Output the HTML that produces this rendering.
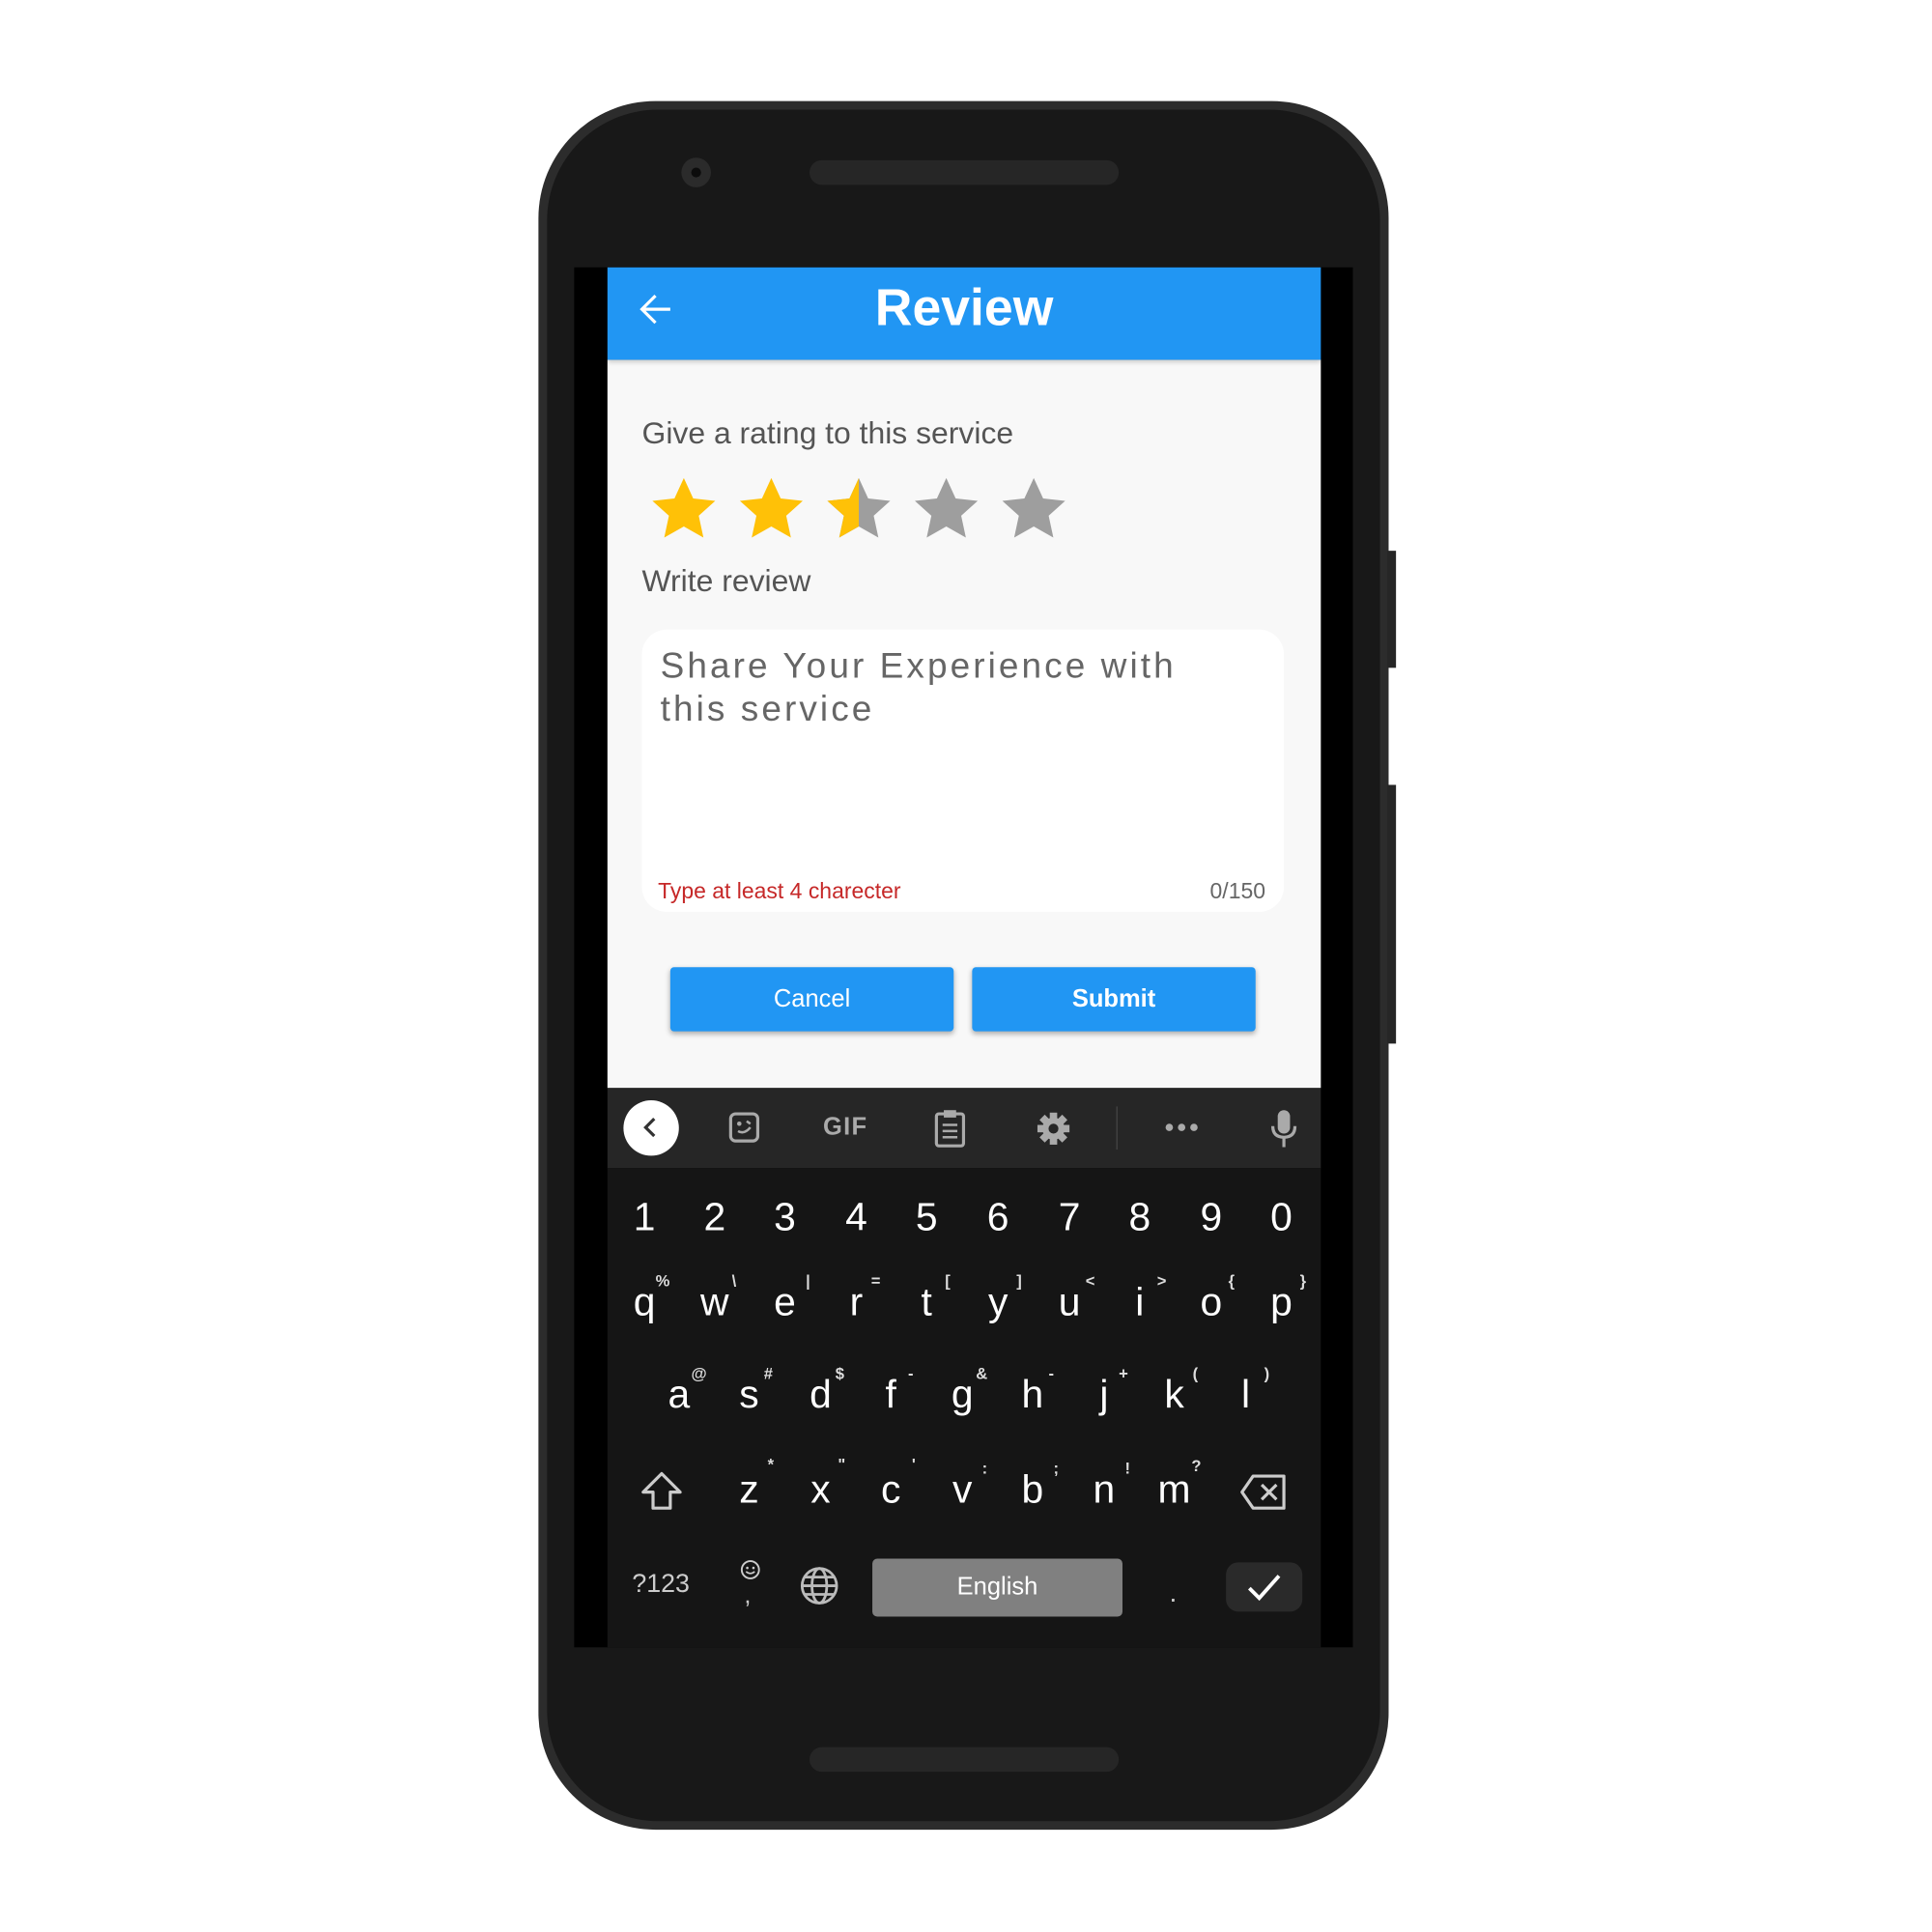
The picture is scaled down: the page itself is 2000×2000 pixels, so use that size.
<!DOCTYPE html>
<html><head><meta charset="utf-8"><style>
html,body{margin:0;padding:0;background:#fff;width:2000px;height:2000px;overflow:hidden}
#w{position:absolute;left:0;top:0;width:1568px;height:1568px;transform:scale(1.2755);transform-origin:0 0;font-family:"Liberation Sans",sans-serif}
.a{position:absolute}
.k{position:absolute;color:#fff;font-size:32px;transform:translate(-50%,-55%);line-height:1}
.s{position:absolute;color:#ddd;font-size:13px;font-weight:bold;line-height:1}
</style></head><body><div id="w">
<div class="a" style="left:437px;top:82px;width:690px;height:1403px;border-radius:95px;background:#2c2c2c"></div>
<div class="a" style="left:444px;top:89px;width:676px;height:1389px;border-radius:90px;background:#181818"></div>
<div class="a" style="left:1126px;top:447px;width:7px;height:95px;background:#262626"></div>
<div class="a" style="left:1126px;top:637px;width:7px;height:210px;background:#262626"></div>
<div class="a" style="left:553px;top:128px;width:24px;height:24px;border-radius:50%;background:#2b2b2b"></div>
<div class="a" style="left:561px;top:136px;width:8px;height:8px;border-radius:50%;background:#0c0c0c"></div>
<div class="a" style="left:657px;top:130px;width:251px;height:20px;border-radius:10px;background:#262626"></div>
<div class="a" style="left:657px;top:1418px;width:251px;height:20px;border-radius:10px;background:#262626"></div>
<div class="a" style="left:466px;top:217px;width:632px;height:1120px;background:#000"></div>
<div class="a" style="left:493px;top:292px;width:579px;height:591px;background:#f8f8f8"></div>
<div class="a" style="left:493px;top:217px;width:579px;height:75px;background:#2196f3;box-shadow:0 2px 4px rgba(0,0,0,.2)"></div>
<svg class="a" style="left:518px;top:237px" width="28" height="28" viewBox="0 0 28 28"><path d="M26 14H4M14 3L3 14l11 11" stroke="#fff" stroke-width="2.5" fill="none"/></svg>
<div class="a" style="left:493px;width:579px;top:226px;text-align:center;color:#fff;font-size:42px;font-weight:bold">Review</div>
<div class="a" style="left:521px;top:338px;color:#555;font-size:25px">Give a rating to this service</div>
<svg class="a" style="left:528px;top:386px" width="345" height="55" viewBox="0 0 345 55">
<defs><path id="st" d="M27 2l7.6 16.5 17.9 2-13.4 12.1 3.8 17.7L27 41.3 11.1 50.3l3.8-17.7L1.5 20.5l17.9-2z"/>
<clipPath id="h"><rect x="0" y="0" width="27" height="55"/></clipPath></defs>
<use href="#st" fill="#ffc107"/>
<use href="#st" x="71" fill="#ffc107"/>
<use href="#st" x="142" fill="#9e9e9e"/>
<g transform="translate(142 0)"><use href="#st" fill="#ffc107" clip-path="url(#h)"/></g>
<use href="#st" x="213" fill="#9e9e9e"/>
<use href="#st" x="284" fill="#9e9e9e"/>
</svg>
<div class="a" style="left:521px;top:458px;color:#555;font-size:25px">Write review</div>
<div class="a" style="left:521px;top:511px;width:521px;height:229px;border-radius:20px;background:#fff"></div>
<div class="a" style="left:536px;top:524px;width:480px;color:#666;font-size:29px;letter-spacing:2.4px;line-height:35px">Share Your Experience with this service</div>
<div class="a" style="left:534px;top:713px;color:#c62828;font-size:18px">Type at least 4 charecter</div>
<div class="a" style="left:982px;top:713px;color:#666;font-size:18px">0/150</div>
<div class="a" style="left:544px;top:785px;width:230px;height:52px;background:#2196f3;border-radius:3px;box-shadow:0 2px 4px rgba(0,0,0,.3);color:#fff;font-size:20px;text-align:center;line-height:52px">Cancel</div>
<div class="a" style="left:789px;top:785px;width:230px;height:52px;background:#2196f3;border-radius:3px;box-shadow:0 2px 4px rgba(0,0,0,.3);color:#fff;font-size:20px;text-align:center;line-height:52px;font-weight:bold">Submit</div>
<div class="a" style="left:493px;top:883px;width:579px;height:65px;background:#262626"></div>
<div class="a" style="left:493px;top:948px;width:579px;height:389px;background:#151515"></div>
<div class="a" style="left:506px;top:893px;width:45px;height:45px;border-radius:50%;background:#fff"></div>
<svg class="a" style="left:518px;top:905px" width="20" height="20"><path d="M13 3L6 10l7 7" stroke="#333" stroke-width="2.5" fill="none"/></svg>
<svg class="a" style="left:590px;top:901px" width="28" height="28"><rect x="3" y="3" width="22" height="22" rx="4" stroke="#aaa" stroke-width="2.5" fill="none"/><circle cx="10" cy="11" r="1.8" fill="#aaa"/><path d="M16 9l3 2M9 17q5 3 10-3" stroke="#aaa" stroke-width="2" fill="none"/></svg>
<div class="a" style="left:668px;top:904px;color:#aaa;font-size:20px;font-weight:bold;letter-spacing:1px">GIF</div>
<svg class="a" style="left:757px;top:900px" width="28" height="32"><rect x="3" y="4" width="22" height="26" rx="2" stroke="#aaa" stroke-width="2.5" fill="none"/><rect x="9" y="1" width="10" height="6" fill="#aaa"/><path d="M8 13h12M8 18h12M8 23h12" stroke="#aaa" stroke-width="2"/></svg>
<svg class="a" style="left:840px;top:901px" width="30" height="30" viewBox="0 0 30 30"><g fill="#aaa"><circle cx="15" cy="15" r="9"/><rect x="12" y="2" width="6" height="26"/><rect x="2" y="12" width="26" height="6"/><rect x="12" y="2" width="6" height="26" transform="rotate(45 15 15)"/><rect x="12" y="2" width="6" height="26" transform="rotate(-45 15 15)"/></g><circle cx="15" cy="15" r="4" fill="#262626"/></svg>
<div class="a" style="left:906px;top:898px;width:1px;height:35px;background:#444"></div>
<svg class="a" style="left:945px;top:910px" width="28" height="10"><circle cx="4" cy="5" r="3" fill="#aaa"/><circle cx="14" cy="5" r="3" fill="#aaa"/><circle cx="24" cy="5" r="3" fill="#aaa"/></svg>
<svg class="a" style="left:1030px;top:899px" width="24" height="34"><rect x="7" y="2" width="10" height="19" rx="5" fill="#aaa"/><path d="M3 15q0 9 9 9t9-9M12 24v8" stroke="#aaa" stroke-width="2.5" fill="none"/></svg>
<div class="k" style="left:523px;top:989px">1</div><div class="k" style="left:580px;top:989px">2</div><div class="k" style="left:637px;top:989px">3</div><div class="k" style="left:695px;top:989px">4</div><div class="k" style="left:752px;top:989px">5</div><div class="k" style="left:810px;top:989px">6</div><div class="k" style="left:868px;top:989px">7</div><div class="k" style="left:925px;top:989px">8</div><div class="k" style="left:983px;top:989px">9</div><div class="k" style="left:1040px;top:989px">0</div>
<div class="k" style="left:523px;top:1058px">q</div><div class="k" style="left:580px;top:1058px">w</div><div class="k" style="left:637px;top:1058px">e</div><div class="k" style="left:695px;top:1058px">r</div><div class="k" style="left:752px;top:1058px">t</div><div class="k" style="left:810px;top:1058px">y</div><div class="k" style="left:868px;top:1058px">u</div><div class="k" style="left:925px;top:1058px">i</div><div class="k" style="left:983px;top:1058px">o</div><div class="k" style="left:1040px;top:1058px">p</div>
<div class="s" style="left:532px;top:1033px">%</div><div class="s" style="left:594px;top:1033px">\</div><div class="s" style="left:654px;top:1033px">|</div><div class="s" style="left:707px;top:1033px">=</div><div class="s" style="left:767px;top:1033px">[</div><div class="s" style="left:825px;top:1033px">]</div><div class="s" style="left:881px;top:1033px">&lt;</div><div class="s" style="left:939px;top:1033px">&gt;</div><div class="s" style="left:997px;top:1033px">{</div><div class="s" style="left:1055px;top:1033px">}</div>
<div class="k" style="left:551px;top:1133px">a</div><div class="k" style="left:608px;top:1133px">s</div><div class="k" style="left:666px;top:1133px">d</div><div class="k" style="left:723px;top:1133px">f</div><div class="k" style="left:781px;top:1133px">g</div><div class="k" style="left:838px;top:1133px">h</div><div class="k" style="left:896px;top:1133px">j</div><div class="k" style="left:953px;top:1133px">k</div><div class="k" style="left:1011px;top:1133px">l</div>
<div class="s" style="left:561px;top:1108px">@</div><div class="s" style="left:620px;top:1108px">#</div><div class="s" style="left:678px;top:1108px">$</div><div class="s" style="left:737px;top:1108px">-</div><div class="s" style="left:792px;top:1108px">&amp;</div><div class="s" style="left:851px;top:1108px">-</div><div class="s" style="left:908px;top:1108px">+</div><div class="s" style="left:968px;top:1108px">(</div><div class="s" style="left:1026px;top:1108px">)</div>
<svg class="a" style="left:519px;top:1193px" width="36" height="36"><path d="M18 3L3 18h8v13h14V18h8z" stroke="#ccc" stroke-width="2.5" fill="none" stroke-linejoin="round"/></svg>
<div class="k" style="left:608px;top:1210px">z</div><div class="k" style="left:666px;top:1210px">x</div><div class="k" style="left:723px;top:1210px">c</div><div class="k" style="left:781px;top:1210px">v</div><div class="k" style="left:838px;top:1210px">b</div><div class="k" style="left:896px;top:1210px">n</div><div class="k" style="left:953px;top:1210px">m</div>
<div class="s" style="left:623px;top:1182px">*</div><div class="s" style="left:680px;top:1182px">"</div><div class="s" style="left:740px;top:1182px">'</div><div class="s" style="left:797px;top:1185px">:</div><div class="s" style="left:855px;top:1185px">;</div><div class="s" style="left:913px;top:1185px">!</div><div class="s" style="left:967px;top:1183px">?</div>
<svg class="a" style="left:1005px;top:1195px" width="40" height="32"><path d="M12 3h25v26H12L3 16z" stroke="#ccc" stroke-width="2.5" fill="none" stroke-linejoin="round"/><path d="M19 10l12 12M31 10L19 22" stroke="#ccc" stroke-width="2.5"/></svg>
<div class="a" style="left:513px;top:1274px;color:#ccc;font-size:21px">?123</div>
<svg class="a" style="left:600px;top:1265px" width="18" height="18"><circle cx="9" cy="9" r="7" stroke="#ccc" stroke-width="1.5" fill="none"/><circle cx="6.5" cy="7.5" r="1" fill="#ccc"/><circle cx="11.5" cy="7.5" r="1" fill="#ccc"/><path d="M5.5 10.5q3.5 3 7 0" stroke="#ccc" stroke-width="1.3" fill="none"/></svg>
<div class="a" style="left:604px;top:1284px;color:#ccc;font-size:20px">,</div>
<svg class="a" style="left:648px;top:1270px" width="34" height="34"><g stroke="#bbb" stroke-width="2.2" fill="none"><circle cx="17" cy="17" r="14"/><ellipse cx="17" cy="17" rx="6" ry="14"/><path d="M3 17h28M5 10h24M5 24h24"/></g></svg>
<div class="a" style="left:708px;top:1265px;width:203px;height:47px;background:#808080;border-radius:4px;color:#fff;font-size:20px;text-align:center;line-height:47px">English</div>
<div class="a" style="left:949px;top:1280px;color:#ccc;font-size:22px">.</div>
<div class="a" style="left:995px;top:1268px;width:62px;height:40px;background:#2a2a2a;border-radius:10px"></div>
<svg class="a" style="left:1011px;top:1274px" width="30" height="28"><path d="M3 15l8 8L27 5" stroke="#fff" stroke-width="3" fill="none"/></svg>
</div></body></html>
